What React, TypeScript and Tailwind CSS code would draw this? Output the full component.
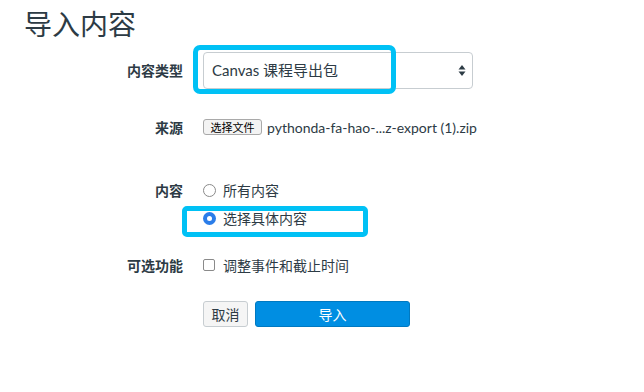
import React from "react";

const Label = ({ children }: { children: React.ReactNode }) => (
  <div className="w-[183px] shrink-0 text-right text-[14px] font-bold">{children}</div>
);

const App = () => {
  return (
    <div className="relative h-[392px] w-[644px] overflow-hidden bg-white text-[#2d3b45] font-['Lato','Noto_Sans_CJK_SC',sans-serif]">
      <h1 className="pl-6 pt-[7px] text-[28px] leading-[34px] font-normal">导入内容</h1>

      {/* 内容类型 */}
      <div className="mt-[11px] flex items-center">
        <Label>内容类型</Label>
        <div className="ml-5 flex h-[37px] w-[270px] items-center justify-between rounded-[4px] border border-[#c7cdd1] bg-white pl-[8px] pr-[6px]">
          <span className="text-[15px]">Canvas 课程导出包</span>
          <svg width="8" height="13" viewBox="0 0 8 13">
            <path d="M4 1 L7.5 5.5 L0.5 5.5 Z" fill="#2d3b45" />
            <path d="M4 12 L7.5 7.5 L0.5 7.5 Z" fill="#2d3b45" />
          </svg>
        </div>
      </div>

      {/* 来源 */}
      <div className="mt-[30px] flex h-4 items-center">
        <Label>来源</Label>
        <div className="ml-5 flex items-center">
          <span className="flex h-4 w-[59px] items-center justify-center rounded-[3px] border border-[#a9a9a9] bg-[#f3f3f3] text-[11px] leading-none text-black">
            选择文件
          </span>
          <span className="ml-[5px] text-[14px]">pythonda-fa-hao-...z-export (1).zip</span>
        </div>
      </div>

      {/* 内容 */}
      <div className="mt-[45px] flex h-5 items-center">
        <Label>内容</Label>
        <div className="ml-5 flex items-center">
          <span className="h-[13px] w-[13px] rounded-full border border-[#8a8a8a] bg-white" />
          <span className="ml-[7px] text-[14px]">所有内容</span>
        </div>
      </div>
      <div className="mt-[8px] flex h-5 items-center">
        <div className="w-[183px] shrink-0" />
        <div className="ml-5 flex items-center">
          <span className="flex h-[13px] w-[13px] items-center justify-center rounded-full bg-[#2b7de9]">
            <span className="h-[5px] w-[5px] rounded-full bg-white" />
          </span>
          <span className="ml-[7px] text-[14px]">选择具体内容</span>
        </div>
      </div>

      {/* 可选功能 */}
      <div className="mt-[27px] flex h-5 items-center">
        <Label>可选功能</Label>
        <div className="ml-5 flex items-center">
          <span className="h-[12px] w-[12px] rounded-[2px] border border-[#8a8a8a] bg-white" />
          <span className="ml-[8px] text-[14px]">调整事件和截止时间</span>
        </div>
      </div>

      {/* buttons */}
      <div className="mt-[26px] flex">
        <div className="w-[183px] shrink-0" />
        <div className="ml-5 flex gap-[7px]">
          <button className="h-[26px] w-[45px] rounded-[3px] border border-[#c7cdd1] bg-[#f5f5f5] text-[14px] text-[#2d3b45]">
            取消
          </button>
          <button className="h-[26px] w-[155px] rounded-[3px] border border-[#0079c1] bg-[#008ee2] text-[14px] text-white">
            导入
          </button>
        </div>
      </div>

      {/* highlight overlays */}
      <div className="pointer-events-none absolute left-[193px] top-[45px] h-[49px] w-[203px] rounded-[7px] border-[5px] border-[#00c1f5]" />
      <div className="pointer-events-none absolute left-[182px] top-[206px] h-[31px] w-[186px] rounded-[5px] border-[5px] border-[#00c1f5]" />
    </div>
  );
};

export default App;
